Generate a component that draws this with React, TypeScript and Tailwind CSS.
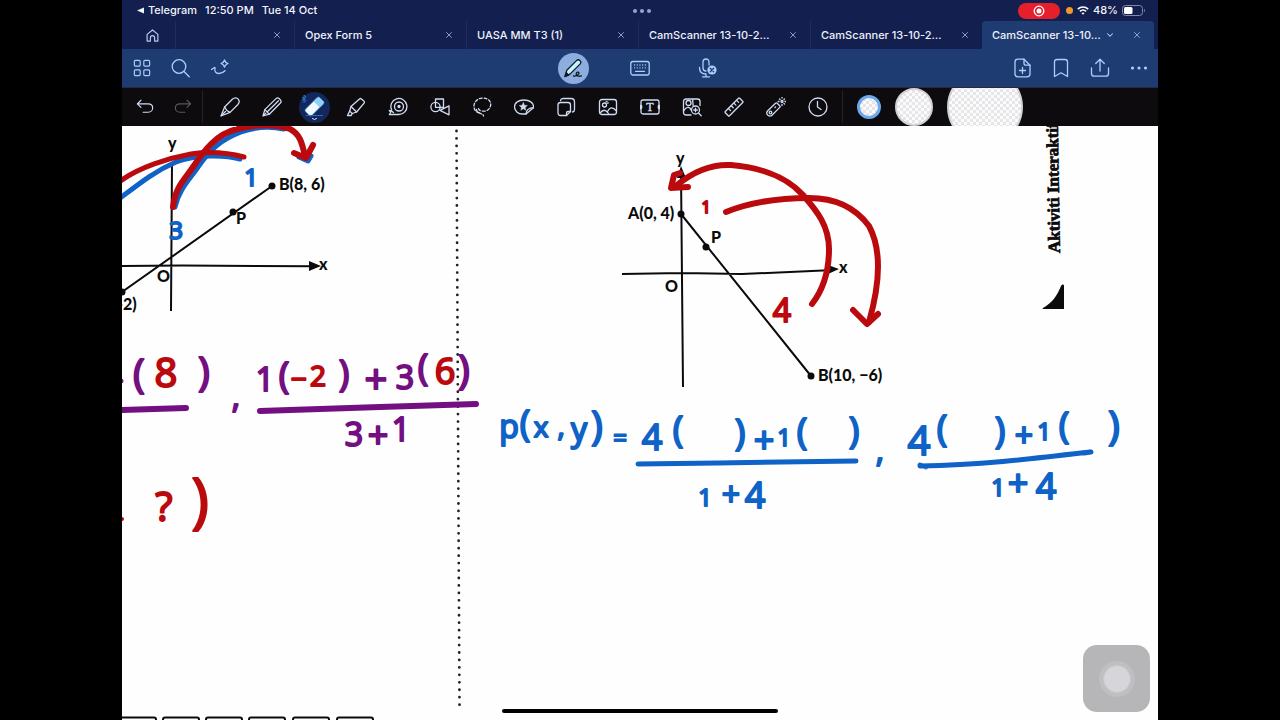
import type { ReactNode } from "react";

import { ChevronDown, X } from "lucide-react";

interface TabType {
  id: number;
  title: string;
  active?: boolean;
}

interface InkType {
  text: string;
  x: number;
  y: number;
  size: number;
}

const BLUE = "#0f62c6";
const RED = "#bb0a0d";
const PURPLE = "#730f80";

const tabs: TabType[] = [
  { id: 1, title: "Opex Form 5" },
  { id: 2, title: "UASA MM T3 (1)" },
  { id: 3, title: "CamScanner 13-10-2…" },
  { id: 4, title: "CamScanner 13-10-2…" },
  { id: 5, title: "CamScanner 13-10…", active: true },
];

const blueInk: InkType[] = [
  { text: "3", x: 176, y: 239, size: 24 },
  { text: "1", x: 251, y: 186, size: 24 },
  { text: "p", x: 509, y: 438, size: 32 },
  { text: "(", x: 525, y: 436, size: 36 },
  { text: "x", x: 541, y: 437, size: 28 },
  { text: ",", x: 561, y: 436, size: 28 },
  { text: "y", x: 579, y: 441, size: 32 },
  { text: ")", x: 597, y: 440, size: 40 },
  { text: "=", x: 620, y: 446, size: 24 },
  { text: "4", x: 652, y: 450, size: 36 },
  { text: "(", x: 678, y: 442, size: 36 },
  { text: ")", x: 740, y: 445, size: 36 },
  { text: "+", x: 764, y: 453, size: 36 },
  { text: "1", x: 784, y: 446, size: 24 },
  { text: "(", x: 802, y: 444, size: 36 },
  { text: ")", x: 854, y: 443, size: 36 },
  { text: ",", x: 880, y: 462, size: 32 },
  { text: "1", x: 705, y: 506, size: 24 },
  { text: "+", x: 731, y: 506, size: 32 },
  { text: "4", x: 755, y: 508, size: 36 },
  { text: "4", x: 919, y: 455, size: 40 },
  { text: "(", x: 942, y: 441, size: 36 },
  { text: ")", x: 1000, y: 443, size: 36 },
  { text: "+", x: 1024, y: 447, size: 32 },
  { text: "1", x: 1044, y: 440, size: 24 },
  { text: "(", x: 1064, y: 438, size: 36 },
  { text: ")", x: 1114, y: 440, size: 40 },
  { text: "1", x: 998, y: 496, size: 24 },
  { text: "+", x: 1018, y: 496, size: 36 },
  { text: "4", x: 1046, y: 499, size: 36 },
];

const purpleInk: InkType[] = [
  { text: "(", x: 139, y: 388, size: 40 },
  { text: ")", x: 204, y: 386, size: 40 },
  { text: ",", x: 236, y: 408, size: 32 },
  { text: "1", x: 265, y: 391, size: 32 },
  { text: "(", x: 284, y: 388, size: 36 },
  { text: ")", x: 344, y: 386, size: 36 },
  { text: "+", x: 376, y: 394, size: 40 },
  { text: "3", x: 405, y: 389, size: 32 },
  { text: "(", x: 423, y: 380, size: 36 },
  { text: ")", x: 464, y: 384, size: 40 },
  { text: "3", x: 354, y: 446, size: 32 },
  { text: "+", x: 378, y: 448, size: 36 },
  { text: "1", x: 401, y: 441, size: 32 },
];

const redInk: InkType[] = [
  { text: "8", x: 166, y: 387, size: 40 },
  { text: "−", x: 299, y: 389, size: 28 },
  { text: "2", x: 318, y: 386, size: 28 },
  { text: "6", x: 445, y: 384, size: 36 },
  { text: "?", x: 164, y: 521, size: 40 },
  { text: ")", x: 200, y: 521, size: 60 },
  { text: "1", x: 706, y: 213, size: 16 },
  { text: "4", x: 782, y: 322, size: 32 },
];

const boxes = [120, 163, 206, 249, 293, 337];

function Icon({ children, className = "size-5" }: { children: ReactNode; className?: string }) {
  return (
    <svg
      viewBox="0 0 20 20"
      fill="none"
      stroke="currentColor"
      strokeWidth="1.3"
      strokeLinecap="round"
      strokeLinejoin="round"
      className={className}
      aria-hidden="true"
    >
      {children}
    </svg>
  );
}

const tools: { label: string; icon: ReactNode }[] = [
  {
    label: "Pen",
    icon: (
      <>
        <path d="M1 19 4.6 10 12.3 2.3C14.5.3 17 .8 18.2 2.2c1.3 1.5 1.2 3.700-.5 5.500L10 15.400 1 19Z" />
        <path d="M4.600 10c1.200 2.800 2.600 4.300 5.400 5.400M1.500 18.500l4-4" />
      </>
    ),
  },
  {
    label: "Pencil",
    icon: (
      <>
        <path d="M1 19l1.800-6.400L14 1.600c1-1 2.400-.8 3.400.2l.8.8c1 1 1.200 2.300.2 3.400L7.300 17.200 1 19Z" />
        <path d="M2.800 12.600l4.500 4.600M5.300 14.800 16.500 3.800M1.600 18.400l2.200-2.200" />
      </>
    ),
  },
  { label: "Eraser", icon: null },
  {
    label: "Highlighter",
    icon: (
      <>
        <path d="M1.500 18.500l2.200-4.400L5 9.500l8.500-7.600c.6-.5 1.300-.5 1.900 0l2.700 2.400c.5.6.5 1.300 0 1.900L10.600 15l-4.400 1.500-1 2H1.500Z" />
        <path d="M5 9.500l5.600 5.500M3.700 14.100l2.500 2.400" />
      </>
    ),
  },
  {
    label: "Tape",
    icon: (
      <>
        <path d="M3.700 13A8 8 0 1 1 11 17.500H1.300l1.400-2-1.400-2c2 0 2.800.8 4.200 2" />
        <circle cx="11" cy="9.500" r="4.500" />
        <circle cx="11" cy="9.500" r="1" fill="currentColor" />
      </>
    ),
  },
  {
    label: "Shapes",
    icon: (
      <>
        <path d="M5.500 5V2h8v8.500h-3" />
        <circle cx="5.500" cy="10" r="4.600" />
        <path d="M5.500 5.400v5h4.800M19 8.800v9L10 13.300l9-4.500Z" />
      </>
    ),
  },
  {
    label: "Lasso",
    icon: (
      <>
        <path d="M7.500 15.800C3.500 15.200 1.700 12 2 8.500 2.500 4 6.500 1 11 1c4.500 0 8 3 7.700 6.700-.3 4-3.700 6.800-7.700 6.500-3-.2-4.700-1.700-4.500-3.200" strokeDasharray="2.800 2" />
        <path d="M4.500 12.500c0 3 3 3.500 5.500 4.500 1 .5 1.500 1.200 1.500 2" strokeDasharray="2.800 1.500" />
      </>
    ),
  },
  {
    label: "Sticker",
    icon: (
      <>
        <path d="M12 17H8.500C4 17 .5 13.900.5 9.800S4.500 3 10 3s9.500 2.800 9.500 6.500v1.200L12 17Z" />
        <path d="M12 17c.3-4 2-6 7.500-6.300" />
        <path d="M9.300 5.500l1.200 2.700 2.900.3-2.200 1.900.7 2.900-2.600-1.500-2.500 1.500.6-2.900-2.200-1.900 2.900-.3 1.200-2.700Z" fill="currentColor" strokeWidth=".4" />
      </>
    ),
  },
  {
    label: "Sticky note",
    icon: (
      <>
        <path d="M10.500 18.500h-6C3 18.500 2 17.500 2 16V8c0-1.500 1-2.500 2.500-2.500H12c1.500 0 2.500 1 2.500 2.500v6.500l-4 4Z" />
        <path d="M10.500 18.500V16c0-1 .5-1.500 1.500-1.500h2.500M4.500 3.500c.3-1.300 1-2 2.500-2h8c2 0 3.500 1.500 3.500 3.500v7.500c0 1.500-.7 2.300-2 2.500" />
      </>
    ),
  },
  {
    label: "Image",
    icon: (
      <>
        <rect x="1.500" y="2.500" width="17" height="15" rx="2.500" />
        <circle cx="6.500" cy="8" r="2" />
        <path d="M2 16c3-3.500 5.500-4 8.500.5M9.500 14.500c2-4 4.500-5.500 9-.5M8 5l1-.5M9.500 6.200l.8-.3" />
      </>
    ),
  },
  {
    label: "Text",
    icon: (
      <>
        <rect x="1" y="3" width="18" height="14" rx="2" />
        <text x="10" y="14" textAnchor="middle" fontSize="12" fill="currentColor" strokeWidth=".4" fontFamily="Liberation Serif, serif">
          T
        </text>
        <path d="M1 9v2M19 9v2" strokeWidth="2.600" />
      </>
    ),
  },
  {
    label: "Elements",
    icon: (
      <>
        <path d="M9 18H4c-1.500 0-2.500-1-2.500-2.500v-11C1.500 3 2.500 2 4 2h11.500C17 2 18 3 18 4.500v4" />
        <circle cx="6.500" cy="6" r="2.500" />
        <path d="M2 13.500C4 9.500 8 9.500 9 13M11 2.500c-1 2 .5 3.500 0 6" />
        <circle cx="13.500" cy="13" r="4" />
        <path d="M16.500 16l2.700 2.700M13.500 11.200v3.600M11.700 13h3.600" />
      </>
    ),
  },
  {
    label: "Ruler",
    icon: (
      <>
        <path d="M1.300 14.500 14.500 1.300c.4-.4.8-.4 1.200 0l3 3c.4.4.4.8 0 1.200L5.500 18.700c-.4.4-.8.4-1.200 0l-3-3c-.4-.4-.4-.8 0-1.200Z" />
        <path d="M4.500 11.500l2 2M7.200 8.800l2 2M9.900 6.100l2 2M12.600 3.400l2 2" />
      </>
    ),
  },
  {
    label: "Laser pointer",
    icon: (
      <>
        <path d="M1.500 14 9.500 6.200c.6-.5 1.200-.5 1.700 0l2.500 2.500c.5.6.5 1.200 0 1.700L6 18.300c-1.200 1-2.800 1-4 0-1.400-1.200-1.500-3-.5-4.300Z" />
        <circle cx="4.500" cy="15.500" r="1.300" />
        <path d="M9 10.500l.6-.6M16 1V.2M16 8.500v-1M12.200 4.500h.8M19 4.500h.8M13.500 2l.5.500M18.500 2l-.5.500M18.500 7l-.5-.5" />
        <circle cx="16" cy="4.500" r="1" />
      </>
    ),
  },
  {
    label: "Recent",
    icon: (
      <>
        <circle cx="10" cy="10" r="9" />
        <path d="M9.500 4.500V10l3.500 2.500" />
      </>
    ),
  },
];

function EraserIcon() {
  return (
    <span className="flex size-[31px] items-center justify-center rounded-full bg-[#12275c]">
      <svg viewBox="0 0 31 31" className="size-full" aria-hidden="true">
        <g transform="rotate(-45 15.500 14.500)">
          <rect x="5.500" y="10" width="20" height="9" rx="2" fill="#f1faff" stroke="#3e8be0" strokeWidth=".8" />
          <path d="M18.500 10.500H23a2 2 0 0 1 2 2v4a2 2 0 0 1-2 2h-4.500Z" fill="#8fd0f7" />
        </g>
        <path d="M7 23.500h17" stroke="#3a67ad" strokeWidth="1" />
        <path d="M13.500 26.500l2 1 2-1" stroke="#dceaff" fill="none" strokeLinecap="round" />
        <path d="M3 5l4 3.500-2 2V3l2 2-4 3.500" stroke="#2f7bd0" fill="none" strokeWidth=".9" />
      </svg>
    </span>
  );
}

function Ink({ items, color }: { items: InkType[]; color: string }) {
  return (
    <g
      fill={color}
      stroke={color}
      strokeWidth="2"
      strokeLinejoin="round"
      textAnchor="middle"
      fontFamily="Open Sans, sans-serif"
    >
      {items.map((item, i) => (
        <text key={i} x={item.x} y={item.y} fontSize={item.size}>
          {item.text}
        </text>
      ))}
    </g>
  );
}

function Worksheet() {
  return (
    <svg viewBox="122 126 1036 594" className="block h-auto w-full" role="img" aria-label="Worksheet page">
      {/* PRINTED PAGE */}

      <path d="M456.500 131 459.500 707" stroke="#222" strokeWidth="2.800" strokeLinecap="round" strokeDasharray="0 7.450" />

      <g fill="none" stroke="#0b0b0b" strokeWidth="2">
        <path d="M172 163 171 311M122 266l60-.5 130 .8M122 292 272 186" />
        <path d="M681 172l2 215M622 274l60-1 60 1 92-4M681 214l130 162" />
        {boxes.map((x) => (
          <rect key={x} x={x} y="717.500" width="36" height="12" rx="2" />
        ))}
      </g>

      <g fill="#0b0b0b">
        <path d="M309 261l12 5-12 5ZM828 265l11 4-11 5ZM677 178l4-12 5 12Z" />
        <circle cx="272" cy="186" r="3.500" />
        <circle cx="233" cy="212" r="3.500" />
        <circle cx="122" cy="292" r="3.500" />
        <circle cx="681" cy="214" r="3.500" />
        <circle cx="706" cy="247" r="3.500" />
        <circle cx="811" cy="376" r="3.500" />
        <path d="M1043 308c9-5 14-12 18-22 1-2 3-2 3 0v23h-20c-1 0-2 0-1-1Z" />
      </g>

      <g fill="#0b0b0b" fontFamily="Lato, sans-serif" fontWeight="900" fontSize="16">
        <text x="168" y="149">y</text>
        <text x="319" y="270">x</text>
        <text x="157" y="282">O</text>
        <text x="279" y="190">B(8, 6)</text>
        <text x="236" y="224">P</text>
        <text x="117" y="310">-2)</text>
        <text x="676" y="164">y</text>
        <text x="839" y="273">x</text>
        <text x="665" y="292">O</text>
        <text x="628" y="219">A(0, 4)</text>
        <text x="711" y="243">P</text>
        <text x="818" y="381">B(10, −6)</text>
      </g>
      <text
        transform="translate(1060 253) rotate(-91)"
        fill="#0b0b0b"
        stroke="#0b0b0b"
        strokeWidth=".7"
        fontFamily="Liberation Serif, serif"
        fontWeight="700"
        fontSize="17"
      >
        Aktiviti Interaktif
      </text>

      {/* PEN STROKES */}

      <g fill="none" strokeLinecap="round" strokeLinejoin="round" strokeWidth="5">
        <g stroke={BLUE}>
          <path d="M119 199C140 183 155 171 176 162c20-8 50-7 64-3" />
          <path d="M175 207c4-18 15-28 23-40 12-17 22-27 43-35 14-5 30-6 43-3" />
          <path d="M299 157l9 4 3-5" />
          <path d="M638 464l80-1 138-2" />
          <path d="M920 466c60-1 110-7 170-14M920 465l6 2M1084 453l7-1" />
        </g>
        <g stroke={PURPLE} strokeWidth="6">
          <path d="M119 410l67-2M260 411l120-4 96-3" />
        </g>
        <g stroke={RED} strokeWidth="6">
          <path d="M119 182c20-15 50-24 72-28 20-3 38-1 53 3" strokeWidth="5" />
          <path d="M173 207c2-20 12-28 20-40 12-18 24-33 44-38 18-5 40-5 53 0 10 5 12 14 15 27" />
          <path d="M294 153l12 5 7-13" />
          <path d="M812 304c14-18 17-38 17-55 0-23-12-38-26-54-18-20-47-28-72-30-19-1-37 6-54 20" />
          <path d="M680 173l-6 2-3 13 17-1" />
          <path d="M726 212c25-10 57-14 83-14 25 0 46 9 60 28 12 22 12 54 0 96" />
          <path d="M853 310l14 14 11-10" />
        </g>
      </g>

      <circle cx="121" cy="381" r="2.500" fill={PURPLE} />
      <circle cx="122" cy="519" r="2" fill={RED} />

      {/* WRITING */}

      <Ink items={blueInk} color={BLUE} />
      <Ink items={purpleInk} color={PURPLE} />
      <Ink items={redInk} color={RED} />
    </svg>
  );
}

function StatusBar() {
  return (
    <div className="grid h-[21px] grid-cols-[1fr_auto_1fr] items-center pr-3 pl-[15px] text-[11px] font-medium text-[#f1f3fb]">
      <div className="flex items-center gap-2 whitespace-nowrap">
        <a href="#telegram" className="flex items-center gap-1">
          <svg viewBox="0 0 8 8" className="size-[7px] fill-current" aria-hidden="true">
            <path d="M8 .5v7L0 4Z" />
          </svg>
          Telegram
        </a>
        <span>12:50 PM</span>
        <span>Tue 14 Oct</span>
      </div>

      <div className="flex gap-[3px]">
        <span className="size-1 rounded-full bg-[#99a2d4]" />
        <span className="size-1 rounded-full bg-[#99a2d4]" />
        <span className="size-1 rounded-full bg-[#99a2d4]" />
      </div>

      <div className="flex items-center justify-end">
        <span className="flex h-4 w-[42px] items-center justify-center rounded-full bg-[#e5202c]">
          <svg viewBox="0 0 12 12" className="size-3" aria-hidden="true">
            <circle cx="6" cy="6" r="4.800" fill="none" stroke="#fff" strokeWidth="1.300" />
            <circle cx="6" cy="6" r="2.500" fill="#fff" />
          </svg>
        </span>
        <span className="ml-1.5 size-[7px] rounded-full bg-[#f0982a]" />
        <svg viewBox="0 0 12 9" className="ml-1 h-[9px] w-3" fill="none" stroke="#fff" strokeWidth="1.600" aria-hidden="true">
          <path d="M.8 3.200c3-2.900 7.400-2.900 10.400 0M2.900 5.400c1.900-1.700 4.300-1.700 6.200 0" />
          <path d="M6 8.700 4.400 7.100c1-.8 2.200-.8 3.200 0Z" fill="#fff" stroke="none" />
        </svg>
        <span className="ml-1">48%</span>
        <svg viewBox="0 0 24 11" className="ml-1 h-[11px] w-6" aria-hidden="true">
          <rect x=".5" y=".5" width="20" height="10" rx="3" fill="none" stroke="#8089ad" />
          <rect x="2" y="2" width="8.500" height="7" rx="1.500" fill="#fff" />
          <path d="M22 3.800c1.200.6 1.200 2.800 0 3.400Z" fill="#8089ad" />
        </svg>
      </div>
    </div>
  );
}

function TabBar() {
  return (
    <nav className="flex h-7 pr-1 text-[11px] font-medium text-[#eef1fb]">
      <button aria-label="Home" className="flex w-[53px] shrink-0 items-center justify-center pl-2">
        <svg viewBox="0 0 14 14" className="size-[13px]" fill="none" stroke="#b9c6ee" strokeWidth="1.300" strokeLinejoin="round" aria-hidden="true">
          <path d="M1.200 5.800 7 1l5.800 4.800V13H9.300V9.500a2.300 2.300 0 0 0-4.600 0V13H1.200Z" />
        </svg>
      </button>

      <div className="flex min-w-0 flex-1 items-center justify-end border-l border-[#202c60] pr-3">
        <button aria-label="Close tab">
          <X className="size-[10px] text-[#a5b2df]" strokeWidth={2} />
        </button>
      </div>

      {tabs.map((tab) => (
        <div
          key={tab.id}
          className={`flex w-[172px] min-w-0 items-center pr-3 pl-2.5 ${
            tab.active ? "rounded-t-[4px] bg-[#1e3b72]" : "border-l border-[#202c60]"
          }`}
        >
          <button className="truncate">{tab.title}</button>
          {tab.active && <ChevronDown className="ml-1 size-[10px] shrink-0 text-[#c5d3f5]" strokeWidth={2.500} />}
          <button aria-label="Close tab" className="ml-auto shrink-0">
            <X className="size-[10px] text-[#a5b2df]" strokeWidth={2} />
          </button>
        </div>
      ))}
    </nav>
  );
}

function DocumentBar() {
  const side = "flex w-[39px] items-center justify-center";

  return (
    <div className="grid h-[38px] grid-cols-[1fr_auto_1fr] items-center bg-[#1e3b72] text-[#a9d0fb]">
      <div className="flex">
        <button aria-label="Pages" className={side}>
          <Icon className="size-[18px]">
            <rect x="1.500" y="1.500" width="6.500" height="6.500" rx="1.200" />
            <rect x="12" y="1.500" width="6.500" height="6.500" rx="1.200" />
            <rect x="1.500" y="12" width="6.500" height="6.500" rx="1.200" />
            <rect x="12" y="12" width="6.500" height="6.500" rx="1.200" />
          </Icon>
        </button>
        <button aria-label="Search" className={side}>
          <Icon>
            <circle cx="8" cy="8.500" r="6.800" />
            <path d="M13 13.500l5.200 5.200" />
          </Icon>
        </button>
        <button aria-label="AI tools" className={side}>
          <Icon>
            <path d="M1.500 11.500l3-2c.5 0 .6.500.5 1-.8 2.500.5 5 4 5 2.300 0 4.500-1 6-2.700" />
            <path d="M14.500 2c.5 2 1.200 2.800 3.500 3.500-2.300.7-3 1.500-3.500 3.500-.5-2-1.200-2.800-3.500-3.500 2.300-.7 3-1.500 3.500-3.500Z" />
          </Icon>
        </button>
      </div>

      <div className="flex items-center gap-9">
        <button aria-label="Draw" className="flex size-[31px] items-center justify-center rounded-full bg-[#8dadde] text-[#101828]">
          <Icon>
            <path d="M2 18.500l1.800-6.200L13.500 2.600c1-1 2.500-1 3.500 0s1 2.500 0 3.500l-9.800 9.800L2 18.500Z" fill="#c3f3fb" />
            <path d="M2 18.500l1.300-3.800 2.400 2.400Z" fill="currentColor" />
            <path d="M10.500 18c2 .5 5.500-1.200 5.500-3 0-1.500-3-1-2.800 1.200.2 2 2.500 2.300 5.300 1.600" />
          </Icon>
        </button>
        <button aria-label="Keyboard" className="flex size-[31px] items-center justify-center">
          <Icon>
            <rect x=".8" y="3.500" width="18.400" height="13.500" rx="2.200" />
            <path d="M5.500 13.300h9M4.500 7h.1M7.200 7h.1M9.900 7h.1M12.600 7h.1M15.300 7h.1M4.500 9.800h.1M7.200 9.800h.1M9.900 9.800h.1M12.600 9.800h.1M15.300 9.800h.1" />
          </Icon>
        </button>
        <button aria-label="Microphone" className="flex size-[31px] items-center justify-center">
          <Icon>
            <path d="M12 7V4c0-4-6-4-6 0v6c0 2 1.500 3 3 3M2.500 9.500c0 4.500 3 6.500 6.500 6.500v2.700M5.500 18.800h7" />
            <circle cx="15" cy="12" r="4.600" fill="currentColor" stroke="none" />
            <path d="M13.300 10.300l3.400 3.400M16.700 10.300l-3.400 3.400" stroke="#1e3b72" />
          </Icon>
        </button>
      </div>

      <div className="flex justify-end">
        <button aria-label="Add page" className={side}>
          <Icon>
            <path d="M12 1.200H6C4.200 1.200 3 2.400 3 4v12c0 1.700 1.200 2.800 3 2.800h9c1.800 0 3-1.100 3-2.800V7.200l-6-6Z" />
            <path d="M12 1.200v4c0 1.300.7 2 2 2h4M10.500 9.500v6M7.500 12.500h6" />
          </Icon>
        </button>
        <button aria-label="Bookmark" className={side}>
          <Icon>
            <path d="M3.500 18.500V3.800C3.500 2.300 4.500 1.500 6 1.500h8c1.500 0 2.500.8 2.500 2.300v14.700L10 14.800l-6.500 3.700Z" />
          </Icon>
        </button>
        <button aria-label="Share" className={side}>
          <Icon>
            <path d="M10 13V1.500M5.700 5.500 10 1.200l4.300 4.300M1.500 10v5.500c0 1.700 1 2.700 2.700 2.700h11.600c1.700 0 2.700-1 2.700-2.700V10" />
          </Icon>
        </button>
        <button aria-label="More" className={side}>
          <Icon>
            <g fill="currentColor" stroke="none">
              <circle cx="3.500" cy="10" r="1.600" />
              <circle cx="10" cy="10" r="1.600" />
              <circle cx="16.500" cy="10" r="1.600" />
            </g>
          </Icon>
        </button>
      </div>
    </div>
  );
}

function ToolBar() {
  const checker =
    "shrink-0 rounded-full bg-[repeating-conic-gradient(#e6e6e8_0_25%,#fbfbfc_0_50%)] bg-[length:6px_6px]";

  return (
    <div className="flex h-[39px] items-center overflow-hidden border-t border-[#232b3d] bg-[#0d0b0e] pl-1 text-[#cfdbf3]">
      <button aria-label="Undo" className="flex w-[38px] shrink-0 items-center justify-center">
        <Icon className="size-[18px]">
          <path d="M5.500 2.500 1.500 6.500l4 4M1.500 6.500h12c3 0 5 2 5 4.500s-2 4.800-5 4.800H8" />
        </Icon>
      </button>
      <button aria-label="Redo" className="flex w-[38px] shrink-0 items-center justify-center text-[#56595f]">
        <Icon className="size-[18px]">
          <path d="M14.500 2.500l4 4-4 4M18.500 6.500h-12c-3 0-5 2-5 4.500s2 4.800 5 4.800H12" />
        </Icon>
      </button>

      <div className="h-8 w-px shrink-0 bg-[#22232a]" />

      <div className="ml-1.5 flex shrink-0">
        {tools.map((tool) => (
          <button key={tool.label} aria-label={tool.label} className="flex w-[42px] items-center justify-center">
            {tool.icon ? <Icon>{tool.icon}</Icon> : <EraserIcon />}
          </button>
        ))}
      </div>

      <div className="ml-[3px] h-8 w-px shrink-0 bg-[#22232a]" />

      <div className="ml-3.5 flex items-center gap-3.5">
        <button aria-label="Small eraser" className={`${checker} size-6 border-[3px] border-[#6ba8ee]`} />
        <button aria-label="Medium eraser" className={`${checker} size-[38px] border-2 border-[#d2d0d3]`} />
        <button aria-label="Large eraser" className={`${checker} size-[76px] border-2 border-[#d2d0d3]`} />
      </div>
    </div>
  );
}

export default function App() {
  return (
    <div className="min-h-screen bg-black px-[122px] font-['Inter',sans-serif]">
      <div className="relative flex min-h-screen flex-col bg-[#fefefe]">
        <header className="bg-[#131f4e]">
          <StatusBar />
          <TabBar />
          <DocumentBar />
          <ToolBar />
        </header>

        <main className="flex-1 overflow-hidden">
          <Worksheet />
        </main>

        {/* ASSISTIVE TOUCH */}

        <button
          aria-label="Assistive touch"
          className="absolute right-2 bottom-2 flex size-[67px] items-center justify-center rounded-[14px] bg-[#b6b5b8]"
        >
          <span className="flex size-9 items-center justify-center rounded-full bg-[#bfbec1]">
            <span className="size-7 rounded-full border border-[#c8c7ca] bg-[#d6d5d9]" />
          </span>
        </button>

        {/* HOME INDICATOR */}

        <div className="absolute inset-x-0 bottom-[7px] flex justify-center">
          <div className="h-1 w-[276px] rounded-full bg-black" />
        </div>
      </div>
    </div>
  );
}
